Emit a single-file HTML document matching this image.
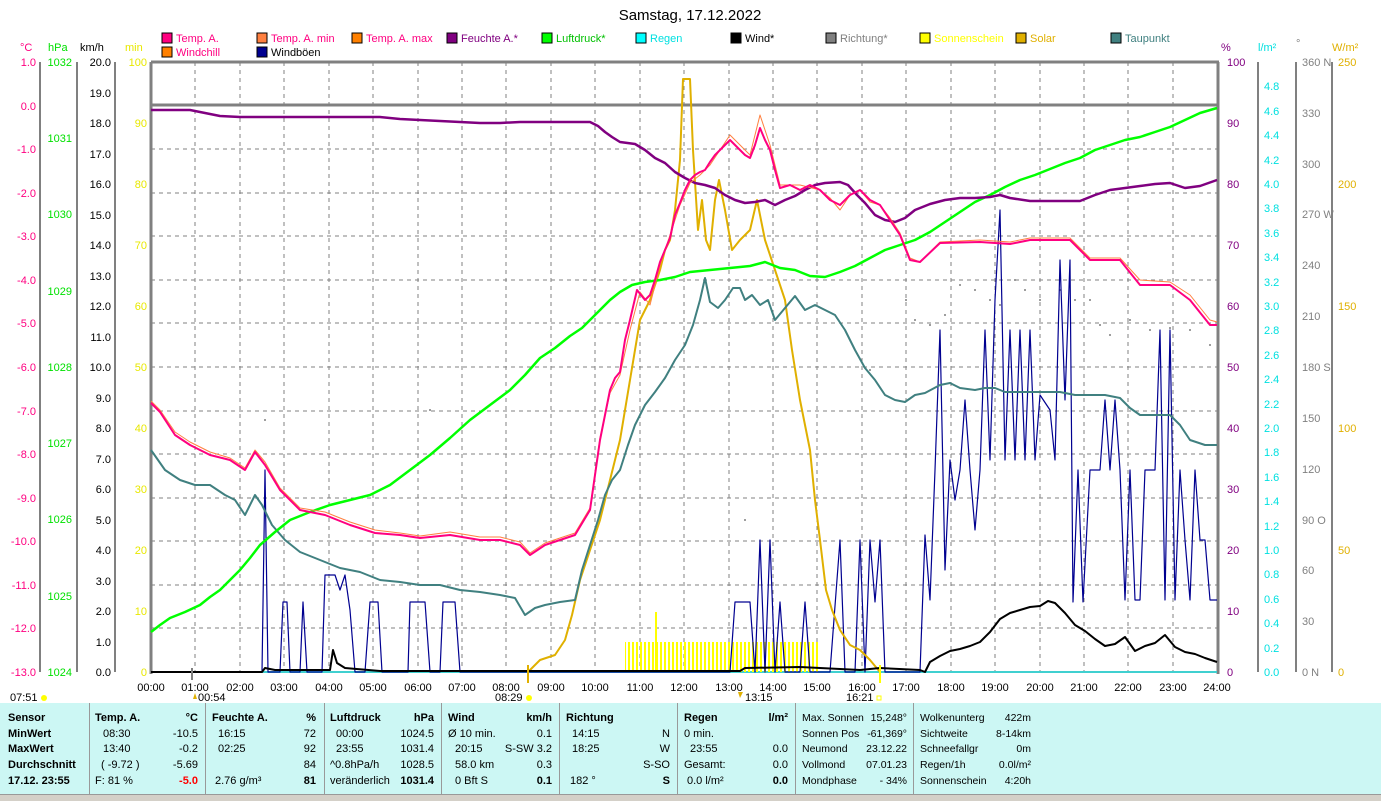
<!DOCTYPE html>
<html><head><meta charset="utf-8"><style>
body{margin:0;background:#fff;width:1381px;height:800px;overflow:hidden;font-family:"Liberation Sans",sans-serif;}
svg text{font-family:"Liberation Sans",sans-serif;font-size:11px;}
.tb{position:absolute;left:0;top:703px;width:1381px;height:91px;background:#ccf7f4;font-size:11px;}
.tb .r{position:absolute;height:16px;line-height:16px;white-space:nowrap;}
.sep{position:absolute;top:0;width:1px;height:91px;background:#999;}
.bot{position:absolute;left:0;top:794px;width:1381px;height:6px;background:#d4d0c8;border-top:1px solid #999;}
</style></head><body>
<svg width="1381" height="703" style="position:absolute;left:0;top:0" xmlns="http://www.w3.org/2000/svg">
<text x="690" y="20" text-anchor="middle" style="font-size:15px">Samstag, 17.12.2022</text>
<g>
<rect x="162" y="33" width="10" height="10" fill="#ff0080" stroke="#000"/><text x="176" y="42" fill="#ff0080">Temp. A.</text>
<rect x="257" y="33" width="10" height="10" fill="#ff8040" stroke="#000"/><text x="271" y="42" fill="#ff0080">Temp. A. min</text>
<rect x="352" y="33" width="10" height="10" fill="#ff8000" stroke="#000"/><text x="366" y="42" fill="#ff0080">Temp. A. max</text>
<rect x="447" y="33" width="10" height="10" fill="#800080" stroke="#000"/><text x="461" y="42" fill="#800080">Feuchte A.*</text>
<rect x="542" y="33" width="10" height="10" fill="#00ff00" stroke="#000"/><text x="556" y="42" fill="#00c000">Luftdruck*</text>
<rect x="636" y="33" width="10" height="10" fill="#00ffff" stroke="#000"/><text x="650" y="42" fill="#00e0e0">Regen</text>
<rect x="731" y="33" width="10" height="10" fill="#000" stroke="#000"/><text x="745" y="42" fill="#000">Wind*</text>
<rect x="826" y="33" width="10" height="10" fill="#808080" stroke="#000"/><text x="840" y="42" fill="#808080">Richtung*</text>
<rect x="920" y="33" width="10" height="10" fill="#ffff00" stroke="#000"/><text x="934" y="42" fill="#ffff00">Sonnenschein</text>
<rect x="1016" y="33" width="10" height="10" fill="#e0b000" stroke="#000"/><text x="1030" y="42" fill="#e0b000">Solar</text>
<rect x="1111" y="33" width="10" height="10" fill="#408080" stroke="#000"/><text x="1125" y="42" fill="#408080">Taupunkt</text>
<rect x="162" y="47" width="10" height="10" fill="#ff8000" stroke="#000"/><text x="176" y="56" fill="#ff0080">Windchill</text>
<rect x="257" y="47" width="10" height="10" fill="#000090" stroke="#000"/><text x="271" y="56" fill="#000">Windböen</text>
</g>
<text x="20" y="51" fill="#ff0080">°C</text><text x="48" y="51" fill="#00e000">hPa</text><text x="80" y="51">km/h</text><text x="125" y="51" fill="#e8e800">min</text>
<text x="1221" y="51" fill="#800080">%</text><text x="1258" y="51" fill="#00e0e0">l/m²</text><text x="1296" y="47" fill="#808080">°</text><text x="1332" y="51" fill="#e0b000">W/m²</text>
<g stroke="#808080" stroke-width="2">
<line x1="40" y1="62" x2="40" y2="672"/><line x1="77" y1="62" x2="77" y2="672"/><line x1="115" y1="62" x2="115" y2="672"/>
<line x1="1258" y1="62" x2="1258" y2="672"/><line x1="1296" y1="62" x2="1296" y2="672"/><line x1="1332" y1="62" x2="1332" y2="672"/>
</g>
<g stroke="#808080" stroke-dasharray="4,4" stroke-width="1">
<line x1="195" y1="62" x2="195" y2="672"/><line x1="240" y1="62" x2="240" y2="672"/><line x1="284" y1="62" x2="284" y2="672"/><line x1="329" y1="62" x2="329" y2="672"/><line x1="373" y1="62" x2="373" y2="672"/><line x1="418" y1="62" x2="418" y2="672"/><line x1="462" y1="62" x2="462" y2="672"/><line x1="506" y1="62" x2="506" y2="672"/><line x1="551" y1="62" x2="551" y2="672"/><line x1="595" y1="62" x2="595" y2="672"/><line x1="640" y1="62" x2="640" y2="672"/><line x1="684" y1="62" x2="684" y2="672"/><line x1="729" y1="62" x2="729" y2="672"/><line x1="773" y1="62" x2="773" y2="672"/><line x1="817" y1="62" x2="817" y2="672"/><line x1="862" y1="62" x2="862" y2="672"/><line x1="906" y1="62" x2="906" y2="672"/><line x1="951" y1="62" x2="951" y2="672"/><line x1="995" y1="62" x2="995" y2="672"/><line x1="1040" y1="62" x2="1040" y2="672"/><line x1="1084" y1="62" x2="1084" y2="672"/><line x1="1128" y1="62" x2="1128" y2="672"/><line x1="1173" y1="62" x2="1173" y2="672"/>
<line x1="151" y1="149" x2="1217" y2="149"/><line x1="151" y1="193" x2="1217" y2="193"/><line x1="151" y1="236" x2="1217" y2="236"/><line x1="151" y1="280" x2="1217" y2="280"/><line x1="151" y1="323" x2="1217" y2="323"/><line x1="151" y1="367" x2="1217" y2="367"/><line x1="151" y1="411" x2="1217" y2="411"/><line x1="151" y1="454" x2="1217" y2="454"/><line x1="151" y1="498" x2="1217" y2="498"/><line x1="151" y1="541" x2="1217" y2="541"/><line x1="151" y1="585" x2="1217" y2="585"/><line x1="151" y1="628" x2="1217" y2="628"/>
</g>
<g stroke="#808080" stroke-width="3" fill="none">
<line x1="151" y1="62" x2="1219" y2="62"/><line x1="151" y1="105" x2="1219" y2="105"/>
<line x1="151" y1="62" x2="151" y2="674"/><line x1="1218" y1="62" x2="1218" y2="674"/>
</g>
<line x1="151" y1="672" x2="1217" y2="672" stroke="#40d0d0" stroke-width="2"/>
<g fill="#ff0080" text-anchor="end">
<text x="36" y="66">1.0</text><text x="36" y="110">0.0</text><text x="36" y="153">-1.0</text><text x="36" y="197">-2.0</text><text x="36" y="240">-3.0</text><text x="36" y="284">-4.0</text><text x="36" y="327">-5.0</text><text x="36" y="371">-6.0</text><text x="36" y="415">-7.0</text><text x="36" y="458">-8.0</text><text x="36" y="502">-9.0</text><text x="36" y="545">-10.0</text><text x="36" y="589">-11.0</text><text x="36" y="632">-12.0</text><text x="36" y="676">-13.0</text>
</g>
<g fill="#00e000" text-anchor="end">
<text x="72" y="66">1032</text><text x="72" y="142">1031</text><text x="72" y="218">1030</text><text x="72" y="295">1029</text><text x="72" y="371">1028</text><text x="72" y="447">1027</text><text x="72" y="523">1026</text><text x="72" y="600">1025</text><text x="72" y="676">1024</text>
</g>
<g text-anchor="end">
<text x="111" y="66">20.0</text><text x="111" y="97">19.0</text><text x="111" y="127">18.0</text><text x="111" y="158">17.0</text><text x="111" y="188">16.0</text><text x="111" y="219">15.0</text><text x="111" y="249">14.0</text><text x="111" y="280">13.0</text><text x="111" y="310">12.0</text><text x="111" y="341">11.0</text><text x="111" y="371">10.0</text><text x="111" y="402">9.0</text><text x="111" y="432">8.0</text><text x="111" y="463">7.0</text><text x="111" y="493">6.0</text><text x="111" y="524">5.0</text><text x="111" y="554">4.0</text><text x="111" y="585">3.0</text><text x="111" y="615">2.0</text><text x="111" y="646">1.0</text><text x="111" y="676">0.0</text>
</g>
<g fill="#e8e800" text-anchor="end">
<text x="147" y="66">100</text><text x="147" y="127">90</text><text x="147" y="188">80</text><text x="147" y="249">70</text><text x="147" y="310">60</text><text x="147" y="371">50</text><text x="147" y="432">40</text><text x="147" y="493">30</text><text x="147" y="554">20</text><text x="147" y="615">10</text><text x="147" y="676">0</text>
</g>
<g fill="#800080">
<text x="1227" y="66">100</text><text x="1227" y="127">90</text><text x="1227" y="188">80</text><text x="1227" y="249">70</text><text x="1227" y="310">60</text><text x="1227" y="371">50</text><text x="1227" y="432">40</text><text x="1227" y="493">30</text><text x="1227" y="554">20</text><text x="1227" y="615">10</text><text x="1227" y="676">0</text>
</g>
<g fill="#00e0e0">
<text x="1264" y="90">4.8</text><text x="1264" y="115">4.6</text><text x="1264" y="139">4.4</text><text x="1264" y="164">4.2</text><text x="1264" y="188">4.0</text><text x="1264" y="212">3.8</text><text x="1264" y="237">3.6</text><text x="1264" y="261">3.4</text><text x="1264" y="286">3.2</text><text x="1264" y="310">3.0</text><text x="1264" y="334">2.8</text><text x="1264" y="359">2.6</text><text x="1264" y="383">2.4</text><text x="1264" y="408">2.2</text><text x="1264" y="432">2.0</text><text x="1264" y="456">1.8</text><text x="1264" y="481">1.6</text><text x="1264" y="505">1.4</text><text x="1264" y="530">1.2</text><text x="1264" y="554">1.0</text><text x="1264" y="578">0.8</text><text x="1264" y="603">0.6</text><text x="1264" y="627">0.4</text><text x="1264" y="652">0.2</text><text x="1264" y="676">0.0</text>
</g>
<g fill="#808080">
<text x="1302" y="66">360 N</text><text x="1302" y="117">330</text><text x="1302" y="168">300</text><text x="1302" y="218">270 W</text><text x="1302" y="269">240</text><text x="1302" y="320">210</text><text x="1302" y="371">180 S</text><text x="1302" y="422">150</text><text x="1302" y="473">120</text><text x="1302" y="524">90 O</text><text x="1302" y="574">60</text><text x="1302" y="625">30</text><text x="1302" y="676">0 N</text>
</g>
<g fill="#e0b000">
<text x="1338" y="66">250</text><text x="1338" y="188">200</text><text x="1338" y="310">150</text><text x="1338" y="432">100</text><text x="1338" y="554">50</text><text x="1338" y="676">0</text>
</g>
<defs><pattern id="sb" width="4" height="30" patternUnits="userSpaceOnUse"><rect width="2" height="30" fill="#ffff00"/></pattern></defs>
<rect x="625" y="642" width="193" height="30" fill="url(#sb)"/>
<line x1="656" y1="612" x2="656" y2="672" stroke="#ffff00" stroke-width="2"/>
<g fill="#808080">
<circle cx="906" cy="300" r="1"/><circle cx="915" cy="320" r="1"/><circle cx="930" cy="325" r="1"/><circle cx="945" cy="315" r="1"/><circle cx="960" cy="285" r="1"/><circle cx="975" cy="290" r="1"/><circle cx="990" cy="300" r="1"/><circle cx="1000" cy="305" r="1"/><circle cx="1015" cy="280" r="1"/><circle cx="1025" cy="290" r="1"/><circle cx="1040" cy="300" r="1"/><circle cx="1060" cy="290" r="1"/><circle cx="1075" cy="300" r="1"/><circle cx="1090" cy="300" r="1"/><circle cx="1100" cy="325" r="1"/><circle cx="1110" cy="335" r="1"/><circle cx="1130" cy="320" r="1"/><circle cx="1150" cy="330" r="1"/><circle cx="1170" cy="328" r="1"/><circle cx="1190" cy="330" r="1"/><circle cx="1210" cy="345" r="1"/><circle cx="870" cy="370" r="1"/><circle cx="265" cy="420" r="1"/><circle cx="430" cy="410" r="1"/><circle cx="745" cy="520" r="1"/>
</g>
<g fill="none" stroke-linejoin="round">
<polyline stroke="#000090" stroke-width="1.2" points="151,672 262,672 265,470 268,672 280,672 283,602 287,602 290,672 300,672 303,602 307,672 322,672 325,575 335,575 340,590 345,575 350,610 355,672 365,672 370,602 378,602 382,672 408,672 410,602 425,602 430,672 440,672 443,602 455,602 460,672 730,672 735,602 750,602 755,672 760,540 765,672 770,540 775,672 780,602 785,672 800,672 805,602 810,672 830,672 840,540 845,672 855,672 860,540 865,672 870,540 875,602 880,540 885,672 920,672 925,535 930,600 935,470 940,330 945,570 950,460 955,500 960,470 965,400 970,470 975,530 980,470 985,330 990,460 995,300 1000,210 1005,460 1010,330 1015,460 1020,330 1025,460 1030,330 1035,460 1040,395 1050,410 1055,460 1060,260 1065,400 1070,260 1073,602 1078,470 1083,602 1090,470 1100,470 1105,400 1110,470 1115,400 1120,470 1125,600 1130,470 1135,600 1140,600 1145,470 1155,470 1160,330 1165,600 1170,330 1175,600 1180,470 1185,540 1190,600 1195,470 1200,540 1205,540 1210,600 1217,600"/>
<polyline stroke="#e0b000" stroke-width="2" points="528,672 540,660 555,655 565,640 572,615 580,580 590,550 600,520 610,480 620,440 630,380 640,320 650,300 660,270 665,250 670,240 675,210 680,160 683,79 690,79 693,150 698,230 702,200 706,240 710,250 715,200 719,180 725,210 732,250 740,240 750,230 757,200 765,240 775,270 785,300 792,350 800,400 810,450 815,500 820,540 826,590 832,610 840,630 850,645 860,650 870,660 880,672"/>
<polyline stroke="#408080" stroke-width="2" points="151,450 158,460 165,470 180,480 195,485 210,485 225,495 235,500 245,515 255,495 262,505 272,525 285,540 300,552 320,560 340,568 360,572 380,580 400,582 420,585 440,585 460,590 480,592 500,595 515,598 525,615 535,608 545,605 560,602 575,600 582,570 590,545 598,520 605,495 612,480 620,470 628,445 635,425 645,405 655,392 665,378 675,360 685,345 693,325 700,300 705,278 710,302 718,308 725,300 733,288 740,288 745,300 752,295 760,305 768,300 775,320 785,308 795,296 805,310 815,305 825,310 835,315 845,330 855,350 865,368 875,380 885,395 895,400 905,402 915,395 925,393 940,385 950,383 960,388 975,390 985,388 995,388 1005,392 1020,392 1060,392 1075,395 1090,395 1105,395 1120,398 1130,408 1140,415 1150,415 1170,415 1180,425 1190,440 1205,445 1217,445"/>
<polyline stroke="#00ff00" stroke-width="2.5" points="151,632 160,625 170,618 185,612 200,605 210,597 220,590 230,580 240,570 250,558 260,545 275,532 290,520 310,512 330,505 350,500 370,495 390,485 410,470 430,455 450,438 470,420 490,405 510,390 525,375 540,358 555,348 570,336 582,328 590,320 600,310 610,300 620,292 632,285 645,282 660,280 675,277 690,272 710,270 730,268 750,266 765,262 780,268 795,270 810,276 825,277 840,272 855,266 870,258 885,250 900,245 915,240 930,232 945,222 960,212 975,202 990,195 1005,187 1020,180 1035,175 1050,169 1065,163 1080,158 1095,150 1110,145 1125,140 1140,137 1155,132 1170,127 1185,120 1200,113 1217,108"/>
<polyline stroke="#800080" stroke-width="2.5" points="151,110 190,110 200,112 220,116 240,117 300,117 340,117 380,117 400,119 420,120 440,121 460,122 480,123 500,123 520,122 570,122 590,122 598,126 605,132 612,137 620,142 635,144 645,150 655,158 665,163 675,172 685,178 695,183 705,185 715,188 725,195 735,200 745,203 755,202 765,200 775,205 785,200 795,196 805,190 815,185 825,183 840,182 848,185 857,195 865,203 875,215 885,220 895,222 905,218 915,210 930,204 945,200 960,198 975,198 990,197 1000,195 1010,198 1030,201 1060,201 1080,201 1095,195 1110,190 1125,188 1140,186 1155,184 1170,183 1185,188 1200,186 1217,180"/>
<polyline stroke="#ff8040" stroke-width="1" points="151,401 160,410 175,432 190,442 210,452 230,458 245,468 255,450 265,462 280,488 300,508 325,512 350,522 375,530 400,533 420,536 450,532 480,537 500,537 520,542 530,553 545,543 560,538 575,533 590,508 600,438 610,393 620,375 630,330 640,292 650,305 660,265 670,235 680,205 690,183 700,175 710,165 720,150 730,135 740,145 750,155 760,115 770,145 780,185 800,185 820,190 830,198 840,210 850,195 860,190 870,202 880,205 890,218 900,233 910,258 920,262 940,242 980,240 1010,242 1030,238 1070,238 1090,258 1120,258 1140,280 1170,282 1190,295 1210,320 1217,322"/>
<polyline stroke="#ff0080" stroke-width="2" points="151,403 160,412 175,435 190,445 210,455 230,460 245,470 255,452 265,465 280,490 300,510 325,515 350,525 375,533 400,535 420,538 450,535 480,540 500,540 520,545 530,555 545,545 560,540 575,535 590,510 600,440 605,415 610,390 615,378 620,372 625,340 630,320 637,290 645,300 650,295 655,280 660,262 665,250 670,238 675,215 680,203 685,190 690,180 695,175 700,172 705,170 710,162 715,155 720,150 725,145 730,140 735,145 740,150 745,155 750,158 755,145 760,128 765,140 770,150 775,170 780,188 790,185 800,190 810,185 820,190 830,200 840,205 850,195 860,190 870,200 880,205 890,220 900,235 910,260 920,262 940,243 980,242 1010,244 1030,240 1070,240 1090,260 1120,260 1140,285 1170,285 1190,300 1210,325 1217,325"/>
<polyline stroke="#000" stroke-width="2" points="151,672 262,672 265,668 275,670 330,670 333,650 337,663 345,668 380,671 740,671 745,668 800,667 860,670 880,668 920,670 925,672 930,662 940,656 950,651 960,649 970,646 980,642 990,632 1000,619 1010,613 1020,610 1030,607 1040,606 1048,601 1055,603 1065,613 1075,625 1085,631 1095,639 1105,646 1115,644 1125,637 1135,651 1145,646 1155,643 1165,635 1175,647 1185,652 1195,654 1205,658 1217,662"/>
</g>
<g text-anchor="middle">
<text x="151" y="691">00:00</text><text x="195" y="691">01:00</text><text x="240" y="691">02:00</text><text x="284" y="691">03:00</text><text x="329" y="691">04:00</text><text x="373" y="691">05:00</text><text x="418" y="691">06:00</text><text x="462" y="691">07:00</text><text x="506" y="691">08:00</text><text x="551" y="691">09:00</text><text x="595" y="691">10:00</text><text x="640" y="691">11:00</text><text x="684" y="691">12:00</text><text x="729" y="691">13:00</text><text x="773" y="691">14:00</text><text x="817" y="691">15:00</text><text x="862" y="691">16:00</text><text x="906" y="691">17:00</text><text x="951" y="691">18:00</text><text x="995" y="691">19:00</text><text x="1040" y="691">20:00</text><text x="1084" y="691">21:00</text><text x="1128" y="691">22:00</text><text x="1173" y="691">23:00</text><text x="1217" y="691">24:00</text>
</g>
<text x="10" y="701">07:51</text><circle cx="44" cy="698" r="3" fill="#ffff00"/>
<line x1="192" y1="668" x2="192" y2="680" stroke="#808080" stroke-width="2"/>
<text x="198" y="701">00:54</text><path d="M193 699 L195 693 L197 699Z" fill="#e0b000"/>
<text x="495" y="701">08:29</text><circle cx="529" cy="698" r="3" fill="#ffff00"/>
<line x1="528" y1="665" x2="528" y2="683" stroke="#e0b000" stroke-width="2"/>
<text x="745" y="701">13:15</text><path d="M738 692 L743 692 L740 698Z" fill="#e0b000"/>
<text x="846" y="701">16:21</text><rect x="877" y="696" width="4" height="4" fill="none" stroke="#ff0"/>
<line x1="880" y1="665" x2="880" y2="683" stroke="#ffff00" stroke-width="2"/>
</svg>
<div class="tb">
<div class="sep" style="left:89px"></div><div class="sep" style="left:205px"></div><div class="sep" style="left:324px"></div><div class="sep" style="left:441px"></div><div class="sep" style="left:559px"></div><div class="sep" style="left:677px"></div><div class="sep" style="left:795px"></div><div class="sep" style="left:913px"></div>
<div class="r" style="left:8px;top:7px;font-weight:bold">Sensor</div><div class="r" style="left:8px;top:23px;font-weight:bold">MinWert</div><div class="r" style="left:8px;top:38px;font-weight:bold">MaxWert</div><div class="r" style="left:8px;top:54px;font-weight:bold">Durchschnitt</div><div class="r" style="left:8px;top:70px;font-weight:bold">17.12. 23:55</div>

<div class="r" style="left:95px;top:7px;font-weight:bold">Temp. A.</div><div class="r" style="right:1183px;top:7px;font-weight:bold">°C</div>
<div class="r" style="left:103px;top:23px">08:30</div><div class="r" style="right:1183px;top:23px">-10.5</div>
<div class="r" style="left:103px;top:38px">13:40</div><div class="r" style="right:1183px;top:38px">-0.2</div>
<div class="r" style="left:101px;top:54px">( -9.72 )</div><div class="r" style="right:1183px;top:54px">-5.69</div>
<div class="r" style="left:95px;top:70px">F: 81 %</div><div class="r" style="right:1183px;top:70px;font-weight:bold;color:#f00">-5.0</div>

<div class="r" style="left:212px;top:7px;font-weight:bold">Feuchte A.</div><div class="r" style="right:1065px;top:7px;font-weight:bold">%</div>
<div class="r" style="left:218px;top:23px">16:15</div><div class="r" style="right:1065px;top:23px">72</div>
<div class="r" style="left:218px;top:38px">02:25</div><div class="r" style="right:1065px;top:38px">92</div>
<div class="r" style="right:1065px;top:54px">84</div>
<div class="r" style="left:215px;top:70px">2.76 g/m³</div><div class="r" style="right:1065px;top:70px;font-weight:bold">81</div>

<div class="r" style="left:330px;top:7px;font-weight:bold">Luftdruck</div><div class="r" style="right:947px;top:7px;font-weight:bold">hPa</div>
<div class="r" style="left:336px;top:23px">00:00</div><div class="r" style="right:947px;top:23px">1024.5</div>
<div class="r" style="left:336px;top:38px">23:55</div><div class="r" style="right:947px;top:38px">1031.4</div>
<div class="r" style="left:330px;top:54px">^0.8hPa/h</div><div class="r" style="right:947px;top:54px">1028.5</div>
<div class="r" style="left:330px;top:70px">veränderlich</div><div class="r" style="right:947px;top:70px;font-weight:bold">1031.4</div>

<div class="r" style="left:448px;top:7px;font-weight:bold">Wind</div><div class="r" style="right:829px;top:7px;font-weight:bold">km/h</div>
<div class="r" style="left:448px;top:23px">Ø 10 min.</div><div class="r" style="right:829px;top:23px">0.1</div>
<div class="r" style="left:455px;top:38px">20:15</div><div class="r" style="right:829px;top:38px">S-SW 3.2</div>
<div class="r" style="left:455px;top:54px">58.0 km</div><div class="r" style="right:829px;top:54px">0.3</div>
<div class="r" style="left:455px;top:70px">0 Bft S</div><div class="r" style="right:829px;top:70px;font-weight:bold">0.1</div>

<div class="r" style="left:566px;top:7px;font-weight:bold">Richtung</div>
<div class="r" style="left:572px;top:23px">14:15</div><div class="r" style="right:711px;top:23px">N</div>
<div class="r" style="left:572px;top:38px">18:25</div><div class="r" style="right:711px;top:38px">W</div>
<div class="r" style="right:711px;top:54px">S-SO</div>
<div class="r" style="left:570px;top:70px">182 °</div><div class="r" style="right:711px;top:70px;font-weight:bold">S</div>

<div class="r" style="left:684px;top:7px;font-weight:bold">Regen</div><div class="r" style="right:593px;top:7px;font-weight:bold">l/m²</div>
<div class="r" style="left:684px;top:23px">0 min.</div>
<div class="r" style="left:690px;top:38px">23:55</div><div class="r" style="right:593px;top:38px">0.0</div>
<div class="r" style="left:684px;top:54px">Gesamt:</div><div class="r" style="right:593px;top:54px">0.0</div>
<div class="r" style="left:687px;top:70px">0.0 l/m²</div><div class="r" style="right:593px;top:70px;font-weight:bold">0.0</div>

<div style="font-size:10.5px">
<div class="r" style="left:802px;top:7px">Max. Sonnen</div><div class="r" style="right:474px;top:7px">15,248°</div>
<div class="r" style="left:802px;top:23px">Sonnen Pos</div><div class="r" style="right:474px;top:23px">-61,369°</div>
<div class="r" style="left:802px;top:38px">Neumond</div><div class="r" style="right:474px;top:38px">23.12.22</div>
<div class="r" style="left:802px;top:54px">Vollmond</div><div class="r" style="right:474px;top:54px">07.01.23</div>
<div class="r" style="left:802px;top:70px">Mondphase</div><div class="r" style="right:474px;top:70px">- 34%</div>

<div class="r" style="left:920px;top:7px">Wolkenunterg</div><div class="r" style="right:350px;top:7px">422m</div>
<div class="r" style="left:920px;top:23px">Sichtweite</div><div class="r" style="right:350px;top:23px">8-14km</div>
<div class="r" style="left:920px;top:38px">Schneefallgr</div><div class="r" style="right:350px;top:38px">0m</div>
<div class="r" style="left:920px;top:54px">Regen/1h</div><div class="r" style="right:350px;top:54px">0.0l/m²</div>
<div class="r" style="left:920px;top:70px">Sonnenschein</div><div class="r" style="right:350px;top:70px">4:20h</div>
</div>
</div>
<div class="bot"></div>
</body></html>
